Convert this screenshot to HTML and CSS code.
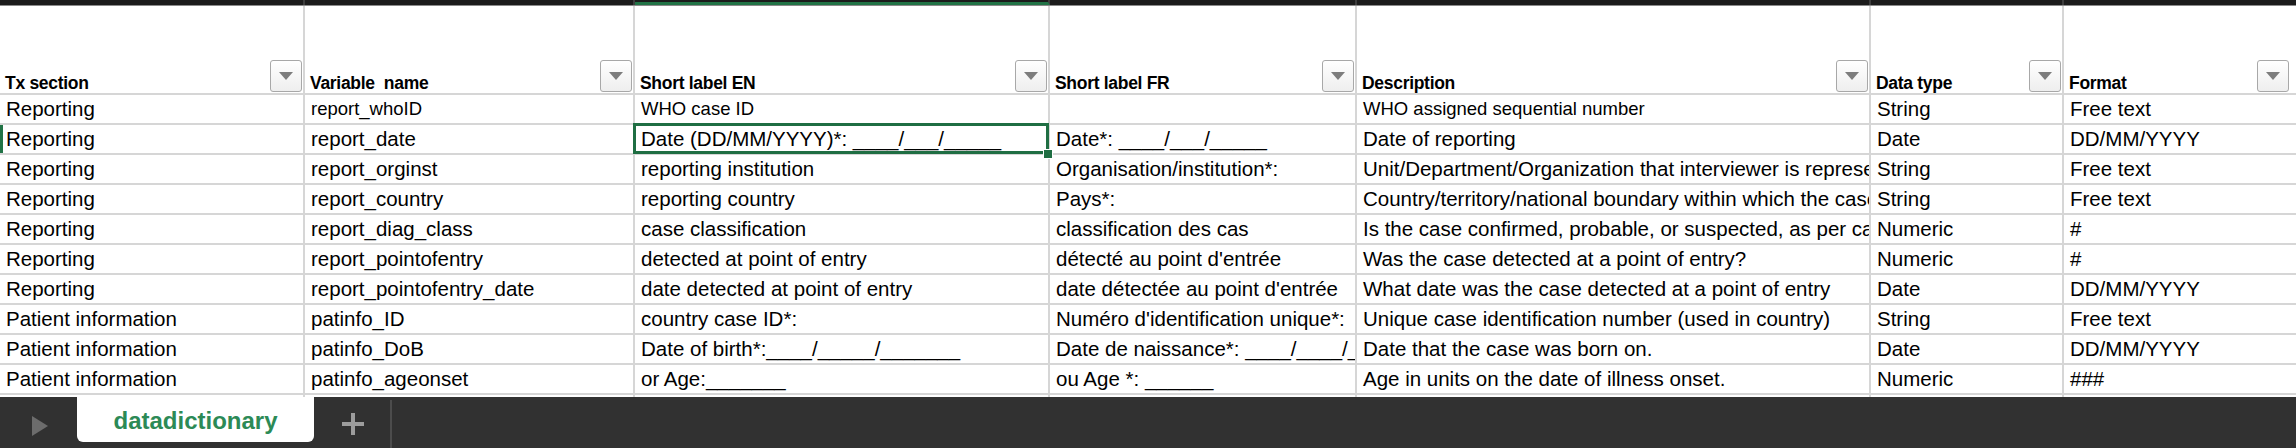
FILE: index.html
```html
<!DOCTYPE html>
<html lang="en">
<head>
<meta charset="utf-8">
<title>datadictionary</title>
<link rel="stylesheet" href="styles.css">
</head>
<body>
<div class="app">
  <div class="colbar">
    <div class="cb"></div><div class="cb"></div><div class="cb cb-sel"></div><div class="cb"></div><div class="cb"></div><div class="cb"></div><div class="cb last"></div>
  </div>
  <div class="sheet">
    <div class="hd"><span class="hd-t">Tx section</span><span class="flt"><svg width="14" height="8" viewBox="0 0 14 8"><polygon points="0,0 14,0 7,8" fill="#7d7d7d"/></svg></span></div>
    <div class="hd"><span class="hd-t">Variable&nbsp; name</span><span class="flt"><svg width="14" height="8" viewBox="0 0 14 8"><polygon points="0,0 14,0 7,8" fill="#7d7d7d"/></svg></span></div>
    <div class="hd"><span class="hd-t">Short label EN</span><span class="flt"><svg width="14" height="8" viewBox="0 0 14 8"><polygon points="0,0 14,0 7,8" fill="#7d7d7d"/></svg></span></div>
    <div class="hd"><span class="hd-t">Short label FR</span><span class="flt"><svg width="14" height="8" viewBox="0 0 14 8"><polygon points="0,0 14,0 7,8" fill="#7d7d7d"/></svg></span></div>
    <div class="hd"><span class="hd-t">Description</span><span class="flt"><svg width="14" height="8" viewBox="0 0 14 8"><polygon points="0,0 14,0 7,8" fill="#7d7d7d"/></svg></span></div>
    <div class="hd"><span class="hd-t">Data type</span><span class="flt"><svg width="14" height="8" viewBox="0 0 14 8"><polygon points="0,0 14,0 7,8" fill="#7d7d7d"/></svg></span></div>
    <div class="hd last"><span class="hd-t">Format</span><span class="flt"><svg width="14" height="8" viewBox="0 0 14 8"><polygon points="0,0 14,0 7,8" fill="#7d7d7d"/></svg></span></div>

    <div class="c">Reporting</div><div class="c sm">report_whoID</div><div class="c sm">WHO case ID</div><div class="c"></div><div class="c sm">WHO assigned sequential number</div><div class="c">String</div><div class="c last">Free text</div>

    <div class="c rowsel">Reporting</div><div class="c">report_date</div><div class="c sel">Date (DD/MM/YYYY)*: ____/___/_____<span class="handle"></span></div><div class="c">Date*: ____/___/_____</div><div class="c">Date of reporting</div><div class="c">Date</div><div class="c last">DD/MM/YYYY</div>

    <div class="c">Reporting</div><div class="c">report_orginst</div><div class="c">reporting institution</div><div class="c">Organisation/institution*:</div><div class="c">Unit/Department/Organization that interviewer is representing</div><div class="c">String</div><div class="c last">Free text</div>

    <div class="c">Reporting</div><div class="c">report_country</div><div class="c">reporting country</div><div class="c">Pays*:</div><div class="c">Country/territory/national boundary within which the case was reported</div><div class="c">String</div><div class="c last">Free text</div>

    <div class="c">Reporting</div><div class="c">report_diag_class</div><div class="c">case classification</div><div class="c">classification des cas</div><div class="c">Is the case confirmed, probable, or suspected, as per case definition</div><div class="c">Numeric</div><div class="c last">#</div>

    <div class="c">Reporting</div><div class="c">report_pointofentry</div><div class="c">detected at point of entry</div><div class="c">détecté au point d'entrée</div><div class="c">Was the case detected at a point of entry?</div><div class="c">Numeric</div><div class="c last">#</div>

    <div class="c">Reporting</div><div class="c">report_pointofentry_date</div><div class="c">date detected at point of entry</div><div class="c">date détectée au point d'entrée</div><div class="c">What date was the case detected at a point of entry</div><div class="c">Date</div><div class="c last">DD/MM/YYYY</div>

    <div class="c">Patient information</div><div class="c">patinfo_ID</div><div class="c">country case ID*:</div><div class="c">Numéro d'identification unique*:</div><div class="c">Unique case identification number (used in country)</div><div class="c">String</div><div class="c last">Free text</div>

    <div class="c">Patient information</div><div class="c">patinfo_DoB</div><div class="c">Date of birth*:____/_____/_______</div><div class="c">Date de naissance*: ____/____/____</div><div class="c">Date that the case was born on.</div><div class="c">Date</div><div class="c last">DD/MM/YYYY</div>

    <div class="c">Patient information</div><div class="c">patinfo_ageonset</div><div class="c">or Age:_______</div><div class="c">ou Age *: ______</div><div class="c">Age in units on the date of illness onset.</div><div class="c">Numeric</div><div class="c last">###</div>

    <div class="c stub"></div><div class="c stub"></div><div class="c stub"></div><div class="c stub"></div><div class="c stub"></div><div class="c stub"></div><div class="c stub last"></div>
  </div>
  <div class="tabbar">
    <div class="nav"><svg width="16" height="20" viewBox="0 0 16 20"><polygon points="0,0 16,10 0,20" fill="#6c6c6c"/></svg></div>
    <div class="tab">datadictionary</div>
    <div class="add"><svg width="22" height="22" viewBox="0 0 22 22"><rect x="9" y="0" width="4" height="22" fill="#9c9c9c"/><rect x="0" y="9" width="22" height="4" fill="#9c9c9c"/></svg></div>
    <div class="divider"></div>
  </div>
</div>
</body>
</html>
```

FILE: styles.css
```css
* { box-sizing: border-box; }
html, body { margin: 0; padding: 0; background: #ffffff; }
body { width: 2296px; height: 448px; overflow: hidden; font-family: "Liberation Sans", Arial, sans-serif; color: #000; }
.app { display: flex; flex-direction: column; height: 448px; }

.colbar {
  display: grid;
  grid-template-columns: 305px 330px 415px 307px 514px 193px 1fr;
  height: 6px;
  background: #1b1b1b;
  border-bottom: 1px solid #8a8a8a;
}
.cb { border-right: 2px solid #3c3c3c; }
.cb.last { border-right: none; }
.cb-sel { border-bottom: 3px solid #217346; }

.sheet {
  display: grid;
  grid-template-columns: 305px 330px 415px 307px 514px 193px 1fr;
  grid-template-rows: 89px repeat(10, 30px) 2px;
}
.hd, .c {
  border-right: 2px solid #d6d6d6;
  border-bottom: 2px solid #d6d6d6;
  min-width: 0;
}
.last { border-right: none; }
.hd {
  display: flex;
  align-items: flex-end;
  justify-content: space-between;
  padding: 0 0 0 5px;
}
.hd-t {
  font-weight: bold;
  font-size: 17.5px;
  line-height: 20px;
  padding-bottom: 0;
  letter-spacing: -0.3px;
  white-space: nowrap;
}
.flt {
  width: 32px;
  height: 32px;
  margin: 0 1px 1px 0;
  border: 1px solid #a8a8a8;
  border-radius: 3px;
  background: linear-gradient(#ffffff, #eeeeee);
  display: flex;
  align-items: center;
  justify-content: center;
  flex: none;
}
.hd.last .flt { margin-right: 7px; }

.c {
  font-size: 20.5px;
  line-height: 28px;
  padding: 0 0 0 6px;
  white-space: nowrap;
  overflow: hidden;
}
.c.sm { font-size: 18.5px; }
.c.stub { border-bottom: none; }
.rowsel { box-shadow: inset 3px 0 0 #217346; }

.sel { position: relative; overflow: visible; }
.sel::after {
  content: "";
  position: absolute;
  left: -2px; top: -2px; right: -1px; bottom: -1px;
  border: 3px solid #1f6e43;
  pointer-events: none;
}
.handle {
  position: absolute;
  right: -5px;
  bottom: -6px;
  width: 10px;
  height: 10px;
  background: #1f6e43;
  border: 1px solid #ffffff;
  z-index: 2;
}

.tabbar {
  flex: 1;
  background: #313131;
  display: flex;
  align-items: flex-start;
}
.nav { width: 77px; display: flex; justify-content: center; padding: 19px 0 0 2px; }
.tab {
  width: 237px;
  height: 45px;
  background: #ffffff;
  border-radius: 0 0 6px 6px;
  display: flex;
  align-items: center;
  justify-content: center;
  font-weight: bold;
  font-size: 24px;
  color: #2c8a56;
  padding-top: 2px;
}
.add { width: 76px; display: flex; justify-content: center; padding: 16px 0 0 2px; }
.divider { width: 2px; height: 100%; background: #4c4c4c; margin-top: 3px; align-self: stretch; }
```
